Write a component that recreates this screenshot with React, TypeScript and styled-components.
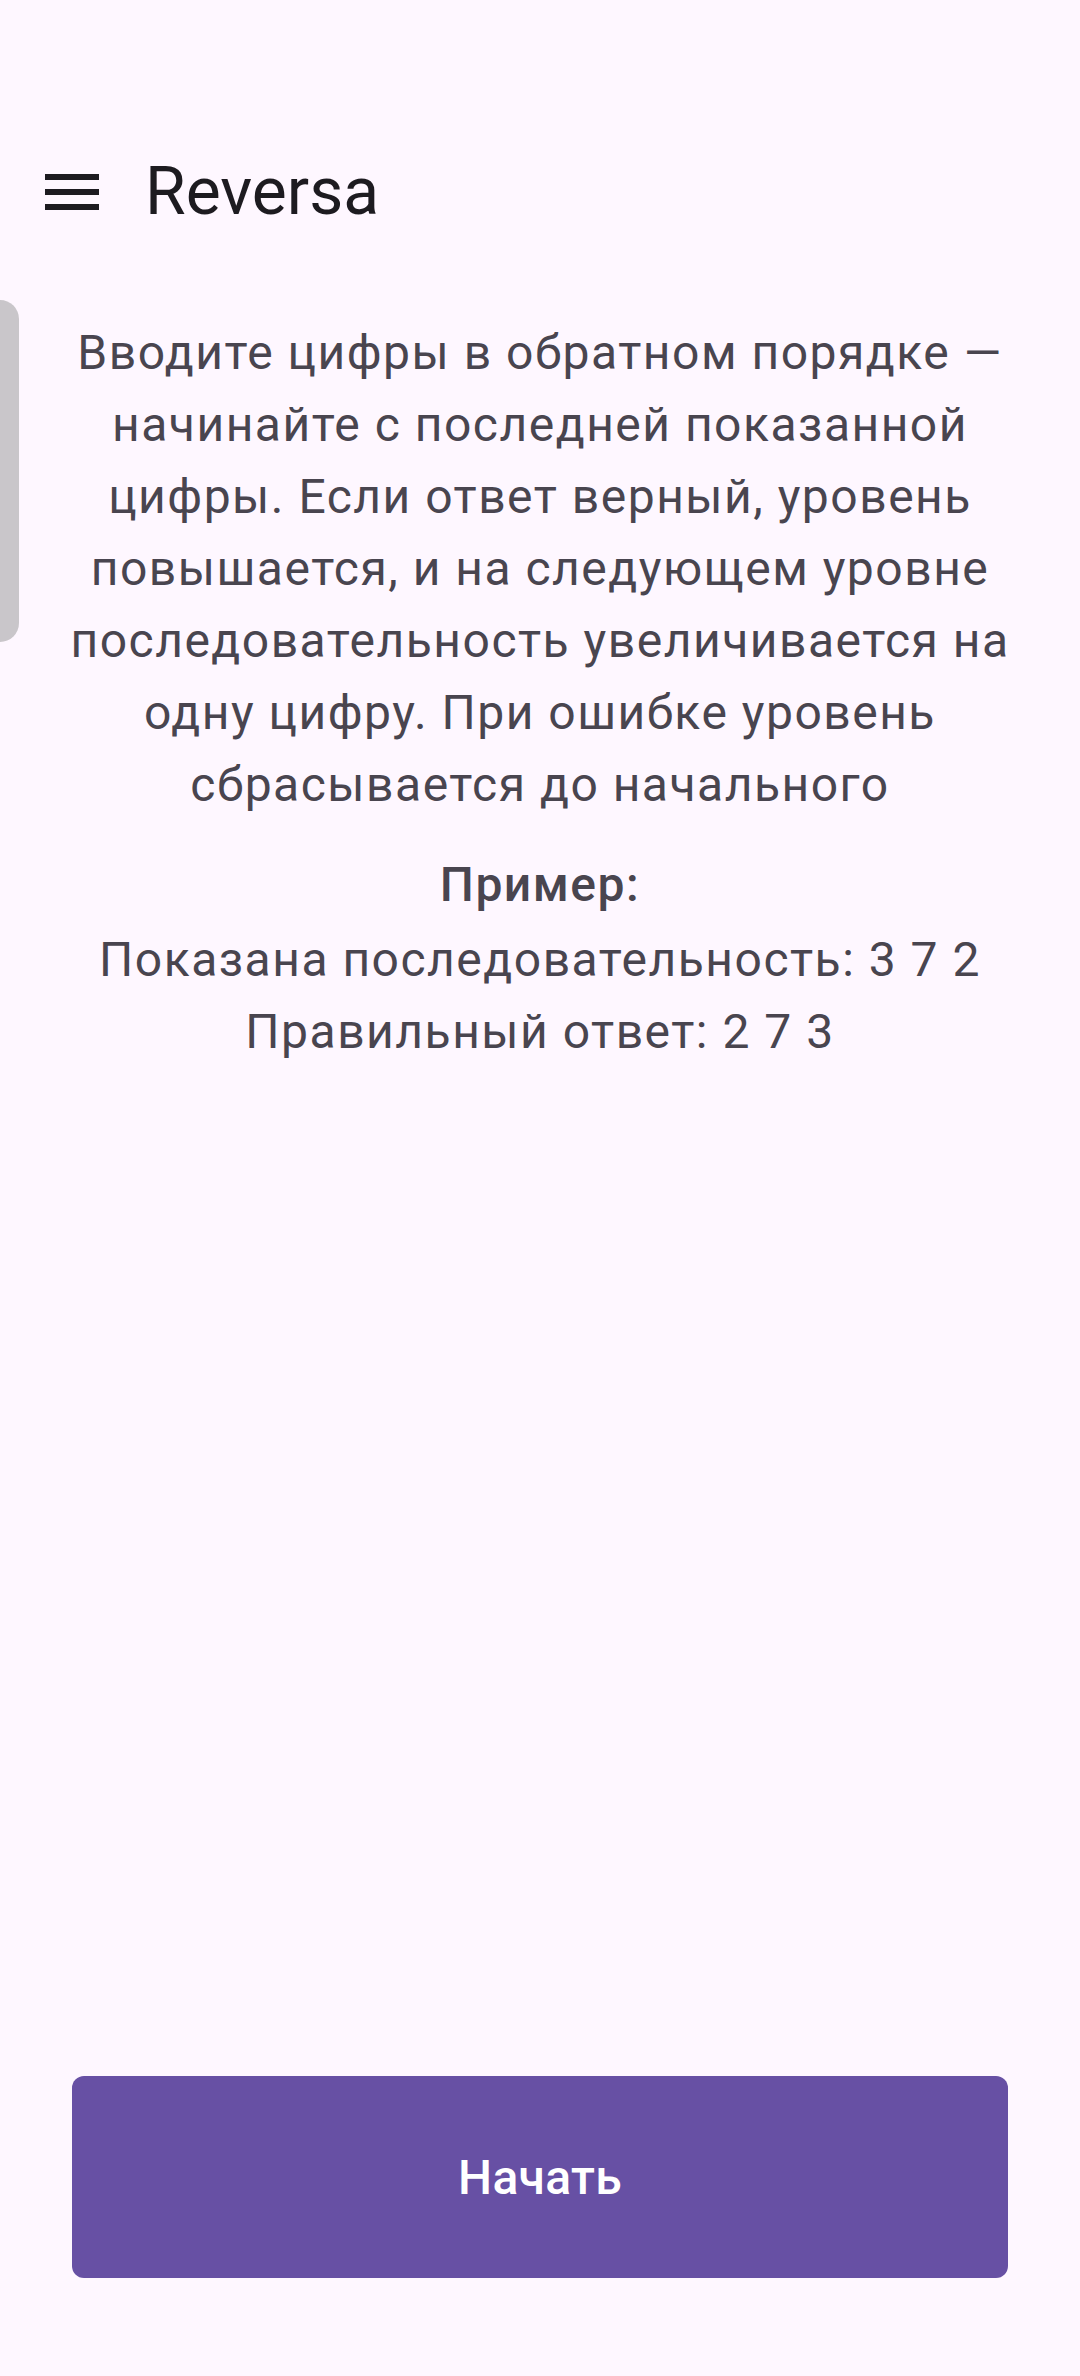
import * as React from 'react';
import styled, { createGlobalStyle } from 'styled-components';

const GlobalStyle = createGlobalStyle`
  html, body {
    margin: 0;
    padding: 0;
    background-color: #fef7ff;
  }
  body {
    font-family: Roboto, "Noto Sans", sans-serif;
  }
`;

const Screen = styled.div`
  position: relative;
  width: 1080px;
  min-height: 2376px;
  box-sizing: border-box;
  padding-top: 96px;
  display: flex;
  flex-direction: column;
  background-color: #fef7ff;
  overflow: hidden;
`;

const TopBar = styled.header`
  height: 192px;
  display: flex;
  align-items: center;
`;

const MenuButton = styled.button`
  width: 144px;
  height: 144px;
  padding: 0;
  border: none;
  background: none;
  display: flex;
  align-items: center;
  justify-content: center;
  color: #1d1b20;
`;

const Title = styled.h1`
  margin: 0 0 0 1px;
  font-size: 66px;
  font-weight: 400;
  line-height: 84px;
  color: #1d1b20;
`;

const EdgeHandle = styled.div`
  position: absolute;
  left: 0;
  top: 300px;
  width: 19px;
  height: 342px;
  background-color: #c9c6ca;
  border-radius: 0 19px 19px 0;
`;

const Content = styled.main`
  padding: 29px 64px 0;
  display: flex;
  flex-direction: column;
  align-items: center;
  flex: 1;
`;

const Paragraph = styled.p<{ $bold?: boolean; $gap?: number }>`
  margin: ${(p) => p.$gap ?? 0}px 0 0;
  font-size: 48px;
  line-height: 72px;
  letter-spacing: 1.5px;
  text-align: center;
  color: #49454f;
  font-weight: ${(p) => (p.$bold ? 500 : 400)};
`;

const Spacer = styled.div`
  flex: 1;
`;

const StartButton = styled.button`
  width: 936px;
  height: 202px;
  margin: 0 72px 98px;
  border: none;
  border-radius: 12px;
  background-color: #6750a4;
  color: #ffffff;
  font-family: Roboto, "Noto Sans", sans-serif;
  font-size: 48px;
  font-weight: 500;
  letter-spacing: 0.3px;
`;

const MenuIcon = () => (
  <svg width="72" height="72" viewBox="0 0 24 24" fill="currentColor">
    <path d="M3 18h18v-2H3v2zm0-5h18v-2H3v2zm0-7v2h18V6H3z" />
  </svg>
);

export default function App() {
  return (
    <>
      <GlobalStyle />
      <Screen>
        <TopBar>
          <MenuButton aria-label="Меню">
            <MenuIcon />
          </MenuButton>
          <Title>Reversa</Title>
        </TopBar>
        <EdgeHandle />
        <Content>
          <Paragraph>
            Вводите цифры в обратном порядке — начинайте с последней показанной
            цифры. Если ответ верный, уровень повышается, и на следующем уровне
            последовательность увеличивается на одну цифру. При ошибке уровень
            сбрасывается до начального
          </Paragraph>
          <Paragraph $bold $gap={28}>Пример:</Paragraph>
          <Paragraph $gap={3}>
            Показана последовательность: 3 7 2
            <br />
            Правильный ответ: 2 7 3
          </Paragraph>
        </Content>
        <Spacer />
        <StartButton>Начать</StartButton>
      </Screen>
    </>
  );
}
